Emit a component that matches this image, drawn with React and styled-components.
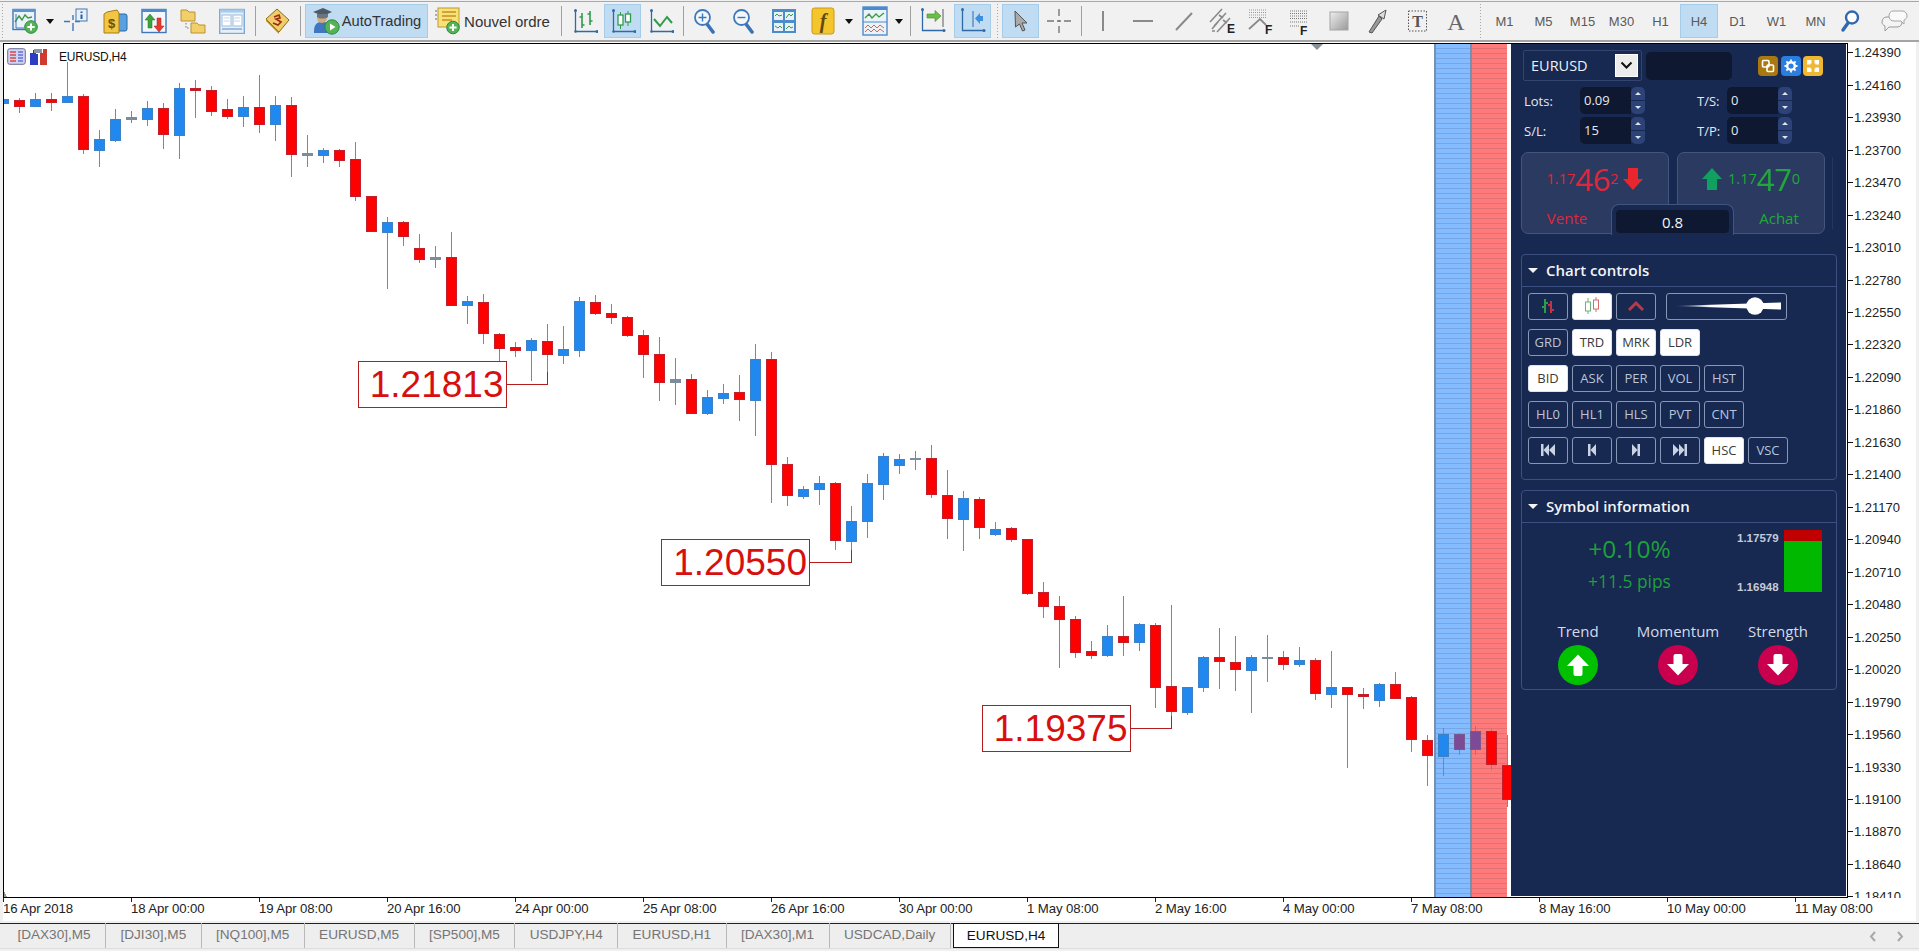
import React from "react";
import styled, { createGlobalStyle } from "styled-components";

const GlobalStyle = createGlobalStyle`
  html, body { margin: 0; padding: 0; background: #f0f0f0; overflow: hidden; }
  * { box-sizing: border-box; }
`;

const Page = styled.div`
  width: 1919px; height: 951px; display: flex; flex-direction: column;
  background: #f0f0f0; font-family: "Liberation Sans", Arial, sans-serif; overflow: hidden;
`;
const Toolbar = styled.div`
  height: 41px; margin-top: 1px; display: flex; align-items: center; padding-left: 1px;
  border-top: 1px solid #a8a8a8; border-bottom: 2px solid #a4a4a4; background: #f1f1f1; flex: none;
`;
const Grip = styled.div`
  width: ${p => p.$w || 5}px; height: 34px; flex: none;
  background: repeating-linear-gradient(to bottom, #a8a8a8 0 1px, transparent 1px 3px) ${p => p.$x || 1}px 0 / 1px 100% no-repeat;
`;
const Slot = styled.div`
  width: ${p => p.$w}px; height: 34px; flex: none; display: flex; align-items: center; justify-content: center;
  gap: ${p => p.$gap || 0}px; font-size: ${p => p.$fs || 14.7}px; color: #333;
  background: ${p => (p.$active ? "#bfdcf3" : "transparent")};
  border: 1px solid ${p => (p.$active ? "#a5cdea" : "transparent")};
`;
const Caret = styled.div`
  width: ${p => p.$w}px; flex: none; display: flex; justify-content: center;
  &::before { content: ""; border: 4px solid transparent; border-top: 5px solid #111; border-bottom: 0; }
`;
const Sep = styled.div`
  width: ${p => p.$w}px; height: 30px; flex: none; position: relative;
  background: linear-gradient(#a0a0a0, #a0a0a0) ${p => p.$x}px 0 / 1px 100% no-repeat;
`;
const Tf = styled(Slot)`font-size: 13px; color: #5a5a5a;`;

const ChartArea = styled.div`
  margin-left: 3px; width: 1913px; height: 879px; background: #fff; flex: none; display: flex; flex-direction: column;
`;
const UpperRow = styled.div`display: flex; height: 856px; padding-top: 1px; flex: none;`;
const Plot = styled.div`
  position: relative; width: 1845px; height: 855px; flex: none; overflow: hidden;
  border: 1px solid #000; border-width: 1px 1px 1px 1px; background: #fff;
`;
const ChartSvg = styled.svg`position: absolute; left: 0; top: 0; display: block;`;
const Band = styled.div`
  position: absolute; top: 0; bottom: 0; left: ${p => p.$l}px; width: ${p => p.$w}px;
  border-left: 2px solid ${p => p.$edge};
  background: repeating-linear-gradient(to bottom, ${p => p.$c} 0 4px, ${p => p.$line} 4px 5px);
`;
const Legend = styled.div`
  position: absolute; left: 3px; top: 4px; display: flex; align-items: center; gap: 3px;
  font-size: 12px; color: #111; letter-spacing: -0.2px;
`;
const LegendText = styled.span`margin-left: 7px;`;
const ShiftMark = styled.div`
  position: absolute; left: 1307px; top: 0; border: 6px solid transparent; border-top: 6px solid #8a9098; border-bottom: 0;
`;
const PriceLabel = styled.div`
  position: absolute; left: ${p => p.$x}px; top: ${p => p.$y}px; width: 149px; height: 47px;
  border: 1px solid #b51c1c; background: #fff; color: #d80f0f; font-size: 37px; line-height: 45px;
  text-align: right; padding-right: 2px;
`;
const Axis = styled.div`
  flex: 1; margin-top: -6.5px; overflow: hidden; font-size: 13px; color: #222;
`;
const AxisRow = styled.div`
  height: 32.47px; display: flex; align-items: center; gap: 1px;
  &::before { content: ""; width: 5px; height: 1px; background: #111; }
`;
const TimeAxis = styled.div`display: flex; height: 23px; flex: none; font-size: 13.2px; color: #222;`;
const TimeCell = styled.div`
  width: 128px; flex: none; position: relative; padding-top: 3px; line-height: 15px; white-space: nowrap; letter-spacing: -0.1px;
  &::before { content: ""; position: absolute; left: 0; top: 0; width: 1px; height: 4px; background: #222; }
`;

const TabBar = styled.div`
  margin-top: 2px; height: 25px; border-top: 1px solid #222; display: flex; padding-left: 3px; flex: none;
  position: relative; background: #eee; font-size: 13.6px; color: #757575;
`;
const Tab = styled.div`
  padding: 0 14.4px; height: 25px; line-height: 23px; margin-top: -1px; flex: none; white-space: nowrap;
  ${p => p.$active
    ? "background:#fff;color:#111;border:1px solid #111;border-top:1px solid #111;padding:0 13px;margin-left:2px;"
    : "border-right:1px solid #b9b9b9;"}
`;
const TabArrows = styled.div`
  position: absolute; right: 15px; top: 7px; display: flex; gap: 19px;
`;
const Footer = styled.div`flex: 1; border-top: 1px solid #dcdcdc; background: #f0f0f0;`;

/* Panel */
const Panel = styled.div`
  position: absolute; left: 1507px; top: 0; width: 335px; height: 852px; background: #172851;
  font-family: "Open Sans", sans-serif; color: #e4e9f2; padding: 6px 0 0 10px; display: flex; flex-direction: column;
`;
const TopRow = styled.div`display: flex; align-items: center; margin-left: 2px; height: 31px;`;
const Combo = styled.div`
  width: 119px; height: 31px; border: 1px solid #33456f; border-radius: 2px; display: flex; align-items: center;
  justify-content: space-between; padding: 0 3px 0 7px; font-size: 14.5px; color: #eef1f6;
`;
const ComboBtn = styled.div`
  width: 23px; height: 23px; background: #ececec; border: 1px solid #fff; display: flex; align-items: center; justify-content: center;
`;
const DarkBox = styled.div`
  width: 86px; height: 28px; margin-left: 4px; background: #0e1830; border-radius: 5px;
`;
const Tools = styled.div`display: flex; gap: 2.5px; margin-left: 26px;`;
const ToolBtn = styled.div`
  width: 20px; height: 20px; border-radius: 4px; background: ${p => p.$c}; display: flex; align-items: center; justify-content: center;
`;
const FieldRow = styled.div`
  display: flex; align-items: center; margin: ${p => p.$mt}px 0 0 3px; height: 27px; font-size: 13px;
`;
const FieldLabel = styled.div`width: ${p => p.$w}px; flex: none; color: #e4e9f2;`;
const Input = styled.div`
  width: 51px; height: 27px; background: #0e1830; border-radius: 5px 0 0 5px; padding-left: 4px; line-height: 27px; color: #e4e9f2; flex: none;
`;
const Spin = styled.div`width: 14px; height: 27px; display: flex; flex-direction: column; gap: 1px; flex: none;`;
const SpinPart = styled.div`
  flex: 1; background: #2d4378; display: flex; align-items: center; justify-content: center;
  border-radius: ${p => (p.$up ? "5px 5px 0 0" : "0 0 5px 5px")};
  &::before { content: ""; border: 3.5px solid transparent;
    ${p => (p.$up ? "border-bottom: 3.5px solid #dfe5f0; border-top: 0;" : "border-top: 3.5px solid #dfe5f0; border-bottom: 0;")} }
`;
const FieldGap = styled.div`width: 52px; flex: none;`;
const Trade = styled.div`
  position: relative; display: flex; gap: 8px; margin-top: 8px; height: 82px; flex: none;
`;
const TradeBox = styled.div`
  width: 148px; height: 82px; border: 1px solid #43557f; border-radius: 7px; background: #2a3a60;
  display: flex; flex-direction: column; color: ${p => p.$c};
`;
const Quote = styled.div`
  height: 52px; display: flex; align-items: center; justify-content: center; font-size: 14.5px; gap: 0;
`;
const Big = styled.span`font-size: 31px; line-height: 40px; letter-spacing: -0.3px;`;
const QuoteArrow = styled.span`display: flex; margin: 0 ${p => p.$r || 0}px 0 ${p => p.$l || 0}px;`;
const TradeLabel = styled.div`
  width: 90px; font-size: 15px; text-align: center; line-height: 29px; align-self: ${p => (p.$right ? "flex-end" : "flex-start")};
`;
const Notch = styled.div`
  position: absolute; left: 90px; top: 52px; width: 123px; height: 31px; background: #172851;
  border: 1px solid #43557f; border-bottom: 0; border-radius: 8px 8px 0 0; padding: 5px 4px 2px;
`;
const SpreadValue = styled.div`
  height: 23px; border-radius: 4px; background: #0e1830; color: #f2f4f8; font-size: 15px; line-height: 24px; text-align: center;
`;
const TradeRule = styled.div`
  position: absolute; left: 311px; top: 5px; width: 1px; height: 72px; background: #26375f;
`;
const Group = styled.div`
  width: 316px; height: ${p => p.$h}px; margin-top: ${p => p.$mt}px; border: 1px solid #3b5080; border-radius: 4px; flex: none;
  display: flex; flex-direction: column;
`;
const GroupHead = styled.div`
  height: 31.5px; border-bottom: 1px solid #3b5080; flex: none; display: flex; align-items: center; gap: 8px; padding-left: 6px;
  font-size: 15px; font-weight: 600; color: #f2f4f8;
  &::before { content: ""; border: 5px solid transparent; border-top: 5px solid #f2f4f8; border-bottom: 0; }
`;
const Controls = styled.div`display: flex; flex-direction: column; padding: 6px 0 0 6px;`;
const CtrlRow = styled.div`display: flex; gap: 4px; height: ${p => p.$h || 27}px; margin-bottom: ${p => p.$mb}px;`;
const Ctrl = styled.div`
  width: 40px; height: 100%; border-radius: 3px; display: flex; align-items: center; justify-content: center;
  font-size: 13px; flex: none;
  ${p => (p.$on ? "background:#fff;color:#3a3a3a;border:1px solid #dfe3ea;" : "border:1px solid #8798b6;color:#b9c6da;")}
`;
const SliderBox = styled.div`
  width: 121px; height: 27px; margin-left: 6px; border: 1px solid #8798b6; border-radius: 3px; display: flex; align-items: center; justify-content: center;
`;
const InfoTop = styled.div`display: flex; height: 97px; flex: none;`;
const InfoPct = styled.div`
  width: 215px; padding-top: 9px; margin-left: 0; text-align: center; color: #1f9f3c; font-size: 24.5px; line-height: 34px;
`;
const Pips = styled.div`font-size: 17.4px; margin-top: 3px; line-height: 24px;`;
const RangeLabels = styled.div`
  width: 44px; margin-top: 8px; height: 62px; display: flex; flex-direction: column; justify-content: space-between;
  font: bold 11.5px "Liberation Sans", Arial, sans-serif; color: #c3cbda; padding: 1px 0 0; flex: none;
`;
const RangeBar = styled.div`
  width: 38px; height: 62px; margin: 7px 0 0 3px; background: linear-gradient(#c00000 0 11px, #00b800 11px); flex: none;
`;
const Signals = styled.div`display: grid; grid-template-columns: 100px 100px 100px; margin-left: 6px;`;
const Signal = styled.div`
  display: flex; flex-direction: column; align-items: center; gap: 3px; font-size: 15px; line-height: 22px; color: #d4dbe7;
`;
const Circle = styled.div`
  width: 40px; height: 40px; border-radius: 50%; background: ${p => p.$c}; display: flex; align-items: center; justify-content: center;
`;

/* ---- icons ---- */
const Ic = ({ w = 26, h = 26, children, vb = "0 0 26 26" }) => (
  <svg width={w} height={h} viewBox={vb} style={{ flex: "none" }}>{children}</svg>
);
const Plus = ({ cx = 19, cy = 19 }) => (
  <>
    <circle cx={cx} cy={cy} r="6.3" fill="#55b255" stroke="#2c8a3c" />
    <path d={`M${cx} ${cy - 3.6}v7.2M${cx - 3.6} ${cy}h7.2`} stroke="#fff" strokeWidth="2" />
  </>
);
const NewChartI = () => (
  <Ic>
    <rect x="1" y="1.5" width="22" height="20" fill="#eaf2fa" stroke="#3f78b8" strokeWidth="1.4" />
    <rect x="1" y="1" width="22" height="3" fill="#5b94d0" />
    <path d="M3 14L7 8l3 4 3-5 3 3 4-1" fill="none" stroke="#3a9a3a" strokeWidth="1.4" />
    <path d="M4 6v14h8" fill="none" stroke="#3f78b8" />
    <Plus />
  </Ic>
);
const InfoI = () => (
  <Ic>
    <path d="M10 7v5M10 15v8M1 13.5h6M12 13.5h5" stroke="#3f78b8" strokeWidth="1.4" />
    <rect x="13" y="1" width="11" height="12" fill="#e8f0fa" stroke="#3f78b8" />
    <path d="M18.5 3.5v1.5M18.5 6.5v4.5" stroke="#2b5e9a" strokeWidth="2" />
  </Ic>
);
const DollarI = () => (
  <Ic>
    <rect x="10" y="6" width="15" height="17" rx="2" fill="#5aa0e0" stroke="#2b6aa8" />
    <path d="M5 4l10-2 2 3v20H2V6z" fill="#f2c544" stroke="#a87c12" />
    <text x="9.5" y="20" fontSize="13" fontFamily="Liberation Sans" fontWeight="bold" textAnchor="middle" fill="#6e4e00">$</text>
  </Ic>
);
const ArrowsI = () => (
  <Ic>
    <rect x="1" y="1.5" width="24" height="23" fill="#f3f7fc" stroke="#3f78b8" strokeWidth="1.4" />
    <rect x="1" y="1" width="24" height="3" fill="#4d8ccb" />
    <path d="M9 6l5 6h-3v8H7v-8H4z" fill="#3aa53a" stroke="#237a23" strokeWidth=".5" />
    <path d="M18 24l-5-6h3v-8h4v8h3z" fill="#e23a2e" stroke="#a52218" strokeWidth=".5" />
  </Ic>
);
const FoldersI = () => (
  <Ic>
    <path d="M1 2h6l2 2h6v9H1z" fill="#f3cf6b" stroke="#b89330" />
    <path d="M11 15h6l2 2h6v8H11z" fill="#f3cf6b" stroke="#b89330" />
    <path d="M6 15v5h4" fill="none" stroke="#777" strokeDasharray="1.5 1.5" />
  </Ic>
);
const LayoutI = () => (
  <Ic>
    <rect x=".7" y="1.5" width="24.6" height="24" fill="#e6eff9" stroke="#7fa9d5" strokeWidth="1.4" />
    <rect x="1" y="1.5" width="24" height="3" fill="#a8cbec" />
    <rect x="3" y="7" width="9" height="11" fill="#fff" stroke="#9bbcdf" />
    <rect x="14" y="7" width="9" height="11" fill="#fff" stroke="#9bbcdf" />
    <path d="M3 21h20" stroke="#9bbcdf" strokeWidth="2" />
    <path d="M15 10h6M15 13h6M4.5 10h6M4.5 13h6" stroke="#c4d6ea" />
  </Ic>
);
const BookI = () => (
  <Ic w={27} h={26} vb="0 0 27 26">
    <path d="M2 11L13 1l12 11-10 12z" fill="#f0cd6a" stroke="#8b6b18" />
    <path d="M2 11l13 13v2L2 13z" fill="#b18a24" />
    <path d="M10 9l5-2 1 3-4 1 5 3-3 3-5-2" fill="none" stroke="#9a2c14" strokeWidth="1.6" />
  </Ic>
);
const AutoI = () => (
  <Ic w={28} h={28} vb="0 0 28 28">
    <path d="M2 24c0-6 3-9 7-9h3c3 0 6 3 6 9v2H2z" fill="#3f78c0" />
    <circle cx="10" cy="11" r="5" fill="#d8a878" />
    <path d="M1 5l10-4 9 4-9 4z" fill="#4e5a66" />
    <path d="M5 7v3c3 2 8 2 11 0V7z" fill="#6a7580" />
    <circle cx="20" cy="20" r="7.2" fill="#55b255" stroke="#2c8a3c" />
    <path d="M18 16.5l5.5 3.5-5.5 3.5z" fill="#fff" />
  </Ic>
);
const OrderI = () => (
  <Ic w={27} h={28} vb="0 0 27 28">
    <rect x="3" y="1" width="21" height="19" fill="#f7e27a" stroke="#bd9a2e" />
    <path d="M7 5h14M7 9h14M7 13h10" stroke="#c78f21" strokeWidth="1.5" />
    <path d="M1 3v2M1 7v2M1 11v2" stroke="#666" />
    <Plus cx={18} cy={20.5} />
  </Ic>
);
const Axes = () => (
  <>
    <path d="M3.5 3v20.5H25" fill="none" stroke="#2f6aa8" strokeWidth="1.3" />
    <circle cx="3.5" cy="2.5" r="1.5" fill="#2f6aa8" />
    <circle cx="25" cy="23.5" r="1.5" fill="#2f6aa8" />
    <circle cx="3.5" cy="23.5" r="1.2" fill="#2f6aa8" />
  </>
);
const BarI = () => (
  <Ic>
    <Axes />
    <path d="M10 5v15M7.5 9H10M10 17h2.5M18 3v14M15.5 6H18M18 13h2.5" stroke="#2f9c4c" strokeWidth="1.6" fill="none" />
  </Ic>
);
const CandleI = () => (
  <Ic>
    <Axes />
    <path d="M10.5 4v17M18 3v15" stroke="#2f9c4c" />
    <rect x="8" y="7" width="5" height="10" fill="#fff" stroke="#2f9c4c" strokeWidth="1.3" />
    <rect x="15.5" y="6" width="5" height="8" fill="#fff" stroke="#2f9c4c" strokeWidth="1.3" />
  </Ic>
);
const LineI = () => (
  <Ic>
    <Axes />
    <path d="M6 11l6 7 7-9 5 6" fill="none" stroke="#2f9c4c" strokeWidth="2" />
  </Ic>
);
const ZoomI = ({ plus }) => (
  <Ic>
    <path d="M14 16l6 8" stroke="#3a74b4" strokeWidth="3.6" strokeLinecap="round" />
    <circle cx="9.5" cy="9.5" r="7.5" fill="#f2f7fc" stroke="#3f78b8" strokeWidth="1.8" />
    <path d={plus ? "M9.5 5.5v8M5.5 9.5h8" : "M5.5 9.5h8"} stroke="#3f78b8" strokeWidth="1.4" />
  </Ic>
);
const TileI = () => (
  <Ic>
    <rect x="1" y="1" width="24" height="24" fill="#4d8ccb" />
    <rect x="3" y="4" width="9" height="8" fill="#e8f1fa" />
    <rect x="14" y="4" width="9" height="8" fill="#e8f1fa" />
    <rect x="3" y="15" width="9" height="8" fill="#e8f1fa" />
    <rect x="14" y="15" width="9" height="8" fill="#e8f1fa" />
    <path d="M4 8l2-2 2 2 3-1M15 10l3-4 2 2 2-2M4 18l3 2 2-2 2 2M15 21l3-3 2 2 2-1" stroke="#3a9a3a" fill="none" />
  </Ic>
);
const FnI = () => (
  <Ic w={24} h={28} vb="0 0 24 28">
    <rect x="1" y="1" width="22" height="26" rx="2.5" fill="#f5c52c" stroke="#c79a18" />
    <text x="12" y="21" fontSize="20" fontStyle="italic" fontWeight="bold" fontFamily="Liberation Serif" textAnchor="middle" fill="#5d4a12">f</text>
  </Ic>
);
const IndI = () => (
  <Ic w={26} h={30} vb="0 0 26 30">
    <rect x="1" y="1" width="24" height="28" fill="#eaf2fa" stroke="#4d8ccb" strokeWidth="1.4" />
    <rect x="1" y="1" width="24" height="3" fill="#4d8ccb" />
    <path d="M3 12l4-4 3 4 4-4 3 3 5-4" fill="none" stroke="#3a9a3a" strokeWidth="1.3" />
    <path d="M1 16h24" stroke="#4d8ccb" />
    <path d="M3 22l3-3 3 3 3-3 3 3 3-3 4 3M3 26l3-3 3 3 3-3 3 3 3-3 4 3" fill="none" stroke="#cc6a55" />
  </Ic>
);
const ShiftI = () => (
  <Ic w={27} h={28} vb="0 0 27 28">
    <path d="M3.5 3v20.5H25" fill="none" stroke="#2f6aa8" strokeWidth="1.3" />
    <circle cx="3.5" cy="2.5" r="1.5" fill="#2f6aa8" />
    <circle cx="25" cy="23.5" r="1.5" fill="#2f6aa8" />
    <path d="M24 2v18" stroke="#5a5a5a" />
    <path d="M8 7h8V3.5l6 5.5-6 5.5V11H8z" fill="#6cbd45" stroke="#3f8c2c" strokeWidth=".6" />
  </Ic>
);
const ScrollI = () => (
  <Ic w={27} h={28} vb="0 0 27 28">
    <path d="M3.5 3v20.5H25" fill="none" stroke="#2f6aa8" strokeWidth="1.3" />
    <circle cx="3.5" cy="2.5" r="1.5" fill="#2f6aa8" />
    <circle cx="25" cy="23.5" r="1.5" fill="#2f6aa8" />
    <path d="M14 4v16" stroke="#2f6aa8" />
    <path d="M24 9v5h-3v3l-5-5.500 5-5.500v3z" fill="#3d8fe0" />
  </Ic>
);
const CursorI = () => (
  <Ic>
    <path d="M7 3l12 12h-5l3 7-2.500 1-3-7-4 3z" fill="#a9a9a9" stroke="#555" />
  </Ic>
);
const CrossI = () => (
  <Ic>
    <path d="M13 1v7M13 12v2M13 18v7M1 13h7M11 13h4M18 13h7" stroke="#777" strokeWidth="1.4" />
  </Ic>
);
const VLineI = () => (<Ic><path d="M13 3v20" stroke="#8a8a8a" strokeWidth="2" /></Ic>);
const HLineI = () => (<Ic><path d="M3 13h20" stroke="#8a8a8a" strokeWidth="2" /></Ic>);
const TrendI = () => (<Ic><path d="M6 22L22 5" stroke="#8a8a8a" strokeWidth="2" /></Ic>);
const ChanI = () => (
  <Ic w={28} h={28} vb="0 0 28 28">
    <path d="M2 15L14 2M6 19L18 6M9 25L22 11M4 22l6-7M4 24h3M11 8l4 3M15 13l4 3" stroke="#8a8a8a" strokeWidth="1.6" fill="none" />
    <text x="19" y="26" fontSize="12" fontWeight="bold" fontFamily="Liberation Sans" fill="#222">E</text>
  </Ic>
);
const GannI = () => (
  <Ic w={26} h={28} vb="0 0 26 28">
    <path d="M1 3h17M1 5.500h17M1 8h17M1 10.500h17" stroke="#9a9a9a" strokeDasharray="1 1" />
    <path d="M1 22l11-10 6 6" stroke="#8a8a8a" strokeWidth="1.8" fill="none" />
    <text x="17" y="27" fontSize="12" fontWeight="bold" fontFamily="Liberation Sans" fill="#222">F</text>
  </Ic>
);
const FiboI = () => (
  <Ic w={22} h={28} vb="0 0 22 28">
    <path d="M1 4h18M1 6.500h18M1 9h18M1 11.500h18M1 15h18M1 19h10" stroke="#777" strokeDasharray="1 1" />
    <text x="11" y="28" fontSize="12" fontWeight="bold" fontFamily="Liberation Sans" fill="#222">F</text>
  </Ic>
);
const RectI = () => (
  <Ic w={20} h={22} vb="0 0 20 22">
    <defs><linearGradient id="rg" x1="0" y1="0" x2="1" y2="1"><stop offset="0" stopColor="#eee" /><stop offset="1" stopColor="#999" /></linearGradient></defs>
    <rect x="1" y="2" width="18" height="18" fill="url(#rg)" stroke="#a5a5a5" />
  </Ic>
);
const ArrI = () => (
  <Ic w={22} h={26} vb="0 0 22 26">
    <path d="M2 24L12 8l3 3L5 25z" fill="#999" stroke="#555" />
    <path d="M11 7l8-5-2 9z" fill="#ddd" stroke="#555" />
  </Ic>
);
const TBoxI = () => (
  <Ic w={22} h={24} vb="0 0 22 24">
    <rect x="1.500" y="2" width="18" height="20" fill="none" stroke="#555" strokeDasharray="1.500 1.500" />
    <text x="10.500" y="18" fontSize="16" fontWeight="bold" fontFamily="Liberation Serif" textAnchor="middle" fill="#555">T</text>
  </Ic>
);
const AI = () => (
  <Ic w={22} h={24} vb="0 0 22 24">
    <text x="11" y="21" fontSize="24" fontFamily="Liberation Serif" textAnchor="middle" fill="#666">A</text>
  </Ic>
);
const SearchI = () => (
  <Ic w={20} h={24} vb="0 0 20 24">
    <path d="M8 14L3 21" stroke="#3268b0" strokeWidth="3.400" strokeLinecap="round" />
    <circle cx="12" cy="8.500" r="6" fill="#fff" stroke="#3268b0" strokeWidth="2.400" />
  </Ic>
);
const ChatI = () => (
  <Ic w={27} h={24} vb="0 0 27 24">
    <path d="M6 8h10c3 0 5 2 5 5s-2 5-5 5H8l-4 4v-5c-2-1-3-2-3-4 0-3 2-5 5-5z" fill="#f4f4f4" stroke="#999" />
    <path d="M12 2h9c3 0 5 2 5 5 0 2-1 3-3 4v4l-3-3h-7c-3 0-5-2-5-5s2-5 4-5z" fill="#fafafa" stroke="#a5a5a5" />
  </Ic>
);
const LegendI = () => (
  <Ic w={19} h={17} vb="0 0 19 17">
    <rect x=".7" y=".7" width="17.600" height="15.600" rx="2" fill="#cfd4f5" stroke="#6b6f92" />
    <path d="M3 4h6M3 7h6M3 10h6M3 13h6" stroke="#d84848" strokeWidth="1.500" />
    <path d="M11 4h5M11 7h5M11 10h5M11 13h5" stroke="#6a6fd0" strokeWidth="1.500" />
  </Ic>
);
const LegendII = () => (
  <Ic w={20} h={17} vb="0 0 20 17">
    <path d="M1 5h3v-3h3v4h2v11H1z" fill="#2a3dc4" />
    <path d="M11 5h3V1h4v16h-7z" fill="#cc3a30" />
    <path d="M5 1h8v4H5z" fill="#8a96a8" />
  </Ic>
);
const Chev = () => (
  <Ic w={13} h={9} vb="0 0 13 9"><path d="M1.500 1.500L6.500 6.500l5-5" fill="none" stroke="#111" strokeWidth="2" /></Ic>
);
const CopyG = () => (
  <Ic w={14} h={14} vb="0 0 14 14">
    <rect x="1.500" y="1.500" width="6.500" height="6.500" rx="1" fill="none" stroke="#fff" strokeWidth="1.600" />
    <rect x="6" y="6" width="6.500" height="6.500" rx="1" fill="none" stroke="#fff" strokeWidth="1.600" />
  </Ic>
);
const GearG = () => (
  <Ic w={14} h={14} vb="0 0 14 14">
    <circle cx="7" cy="7" r="3.800" fill="none" stroke="#fff" strokeWidth="2.400" />
    <path d="M7 .5v2M7 11.500v2M.5 7h2M11.500 7h2M2.400 2.400l1.400 1.400M10.200 10.200l1.400 1.400M2.400 11.600l1.400-1.400M10.200 3.800l1.400-1.400" stroke="#fff" strokeWidth="1.800" />
  </Ic>
);
const FourG = () => (
  <Ic w={14} h={14} vb="0 0 14 14">
    <path d="M1 1h4.500v4.500H1zM8.500 1H13v4.500H8.500zM1 8.500h4.500V13H1zM8.500 8.500H13V13H8.500z" fill="#fff" />
    <rect x="4.500" y="4.500" width="5" height="5" fill="#f0b733" />
  </Ic>
);
const FatArrow = ({ up, c, w = 20, h = 24 }) => (
  <Ic w={w} h={h} vb="0 0 20 24">
    <path d={up ? "M10 1l10 11h-5v11H5V12H0z" : "M10 23L0 12h5V1h10v11h5z"} fill={c} />
  </Ic>
);
const RoundArrow = ({ up }) => (
  <Ic w={24} h={24} vb="0 0 24 24">
    <path d={up
      ? "M12 1.500L23 13h-6.500v8a2 2 0 0 1-2 2h-5a2 2 0 0 1-2-2v-8H1z"
      : "M12 22.500L1 11h6.500V3a2 2 0 0 1 2-2h5a2 2 0 0 1 2 2v8H23z"} fill="#fff" strokeLinejoin="round" />
  </Ic>
);
const BarsMini = () => (
  <Ic w={18} h={18} vb="0 0 18 18">
    <path d="M6 2v14M3 10h3M6 6h3" stroke="#2f9c4c" strokeWidth="2" />
    <path d="M12 4v12M9 8h3M12 13h3" stroke="#c8323c" strokeWidth="2" />
  </Ic>
);
const CandlesMini = () => (
  <Ic w={20} h={18} vb="0 0 20 18">
    <path d="M6 1v16" stroke="#6db07a" />
    <rect x="3.500" y="5" width="5" height="9" fill="#fff" stroke="#6db07a" />
    <path d="M14 0v15" stroke="#d86a6a" />
    <rect x="11.500" y="3" width="5" height="9" fill="#fff" stroke="#d86a6a" />
  </Ic>
);
const LineMini = () => (
  <Ic w={18} h={14} vb="0 0 18 14"><path d="M2 11l7-7 7 7" fill="none" stroke="#b53a4a" strokeWidth="3" /></Ic>
);
const Skip = ({ d }) => (
  <Ic w={16} h={14} vb="0 0 16 14"><path d={d} fill="#c9d3e3" /></Ic>
);
const SliderDraw = () => (
  <Ic w={115} h={22} vb="0 0 115 22">
    <defs><linearGradient id="sl" x1="0" x2="1"><stop offset="0" stopColor="#fff" stopOpacity="0" /><stop offset=".35" stopColor="#fff" /></linearGradient></defs>
    <path d="M4 11L112 7.500v7z" fill="url(#sl)" />
    <circle cx="86" cy="11" r="8.700" fill="#fff" />
  </Ic>
);

/* ---- chart data: [kind, high, top, bottom, low], as read off the chart ---- */
const A = [
  ["b",178,178,188,188],["r",174,181,197,218],["b",159,178,197,197],["r",159,178,185,212],["b",65,169,185,185],
  ["r",162,169,328,342],["b",270,298,329,380],["b",208,238,299,305],["d",214,232,236,250],["b",183,205,236,258],
  ["r",189,205,281,326],["b",129,144,284,356],["r",120,145,151,234],["r",138,151,214,227],["r",177,208,227,237],
  ["b",168,202,227,261],["r",105,202,253,279],["b",168,196,253,302],["r",171,196,343,410],["d",285,340,344,381],
  ["b",324,330,344,369],["r",328,331,359,381],["r",306,358,469,483],["r",467,468,572,574],["b",531,547,575,747],
  ["r",544,545,587,618],["r",583,625,658,670],["d",618,652,656,684],["r",576,652,794,796],["b",769,784,794,852],
  ["r",762,785,880,912],["r",880,881,925,968],["r",907,922,929,950],["b",895,901,929,1023],["r",852,902,943,1030],
  ["b",857,928,944,972],["b",771,784,929,950],["r",765,785,818,824],["r",793,820,832,852],["r",827,832,884,891],
  ["r",870,884,943,1013],
];
const B = [
  ["r",50,103,187,242],["d",114,178,185,254],["r",162,178,280,281],["b",210,232,278,284],["b",193,220,233,252],
  ["r",165,217,236,302],["b",72,118,239,347],["r",97,118,431,548],["r",411,431,526,557],["b",498,508,527,537],
  ["b",468,490,506,555],["r",487,490,661,689],["b",558,604,662,725],["b",462,490,604,654],["b",400,409,491,540],
  ["b",402,418,434,462],["d",393,414,418,449],["r",376,415,523,533],["r",450,524,595,656],["b",514,535,596,692],
  ["r",532,538,622,656],["b",606,628,641,648],["r",620,625,658,665],["r",656,658,818,824],
];
const C = [
  ["r",66,97,139,173],["r",108,139,176,323],["r",168,176,277,293],["r",243,274,284,296],["b",195,229,284,290],
  ["r",108,229,245,287],["b",188,192,245,272],["r",188,196,382,443],["r",135,379,454,505],["b",380,382,455,465],
  ["b",289,292,380,395],["r",204,292,302,386],["r",228,307,328,392],["b",285,292,329,458],["d",225,292,293,365],
  ["r",272,292,311,329],["b",261,300,311,321],["r",295,301,400,419],["b",272,381,401,443],["r",381,382,401,623],
  ["r",384,401,409,446],["b",370,372,419,440],["r",337,373,415,416],["r",408,412,538,575],["r",525,539,586,678],
  ["b",505,522,587,647],["p",520,523,568,586],["p",498,514,566,586],["r",508,514,613,630],["r",525,614,716,740],
];
const conv = (arr, y0, start) => arr.map((c, k) => ({
  i: start + k, kind: c[0], h: y0 + c[1] / 3, t: y0 + c[2] / 3, b: y0 + c[3] / 3, l: y0 + c[4] / 3,
}));
const CANDLES = [...conv(A, 40, 0), ...conv(B, 320, 41), ...conv(C, 560, 65)];
const FILL = { r: "#ff0000", b: "#2088ee", d: "#7b8c9c", p: "#7d4a96" };
const EDGE = { r: "#c2202c", b: "#3d82c6", d: "#7b8c9c", p: "#7a5a8e" };

const Chart = () => (
  <ChartSvg width="1843" height="853" viewBox="4 44 1843 853" shapeRendering="crispEdges">
    {CANDLES.map(c => {
      const cx = 3.5 + 16 * c.i;
      const top = Math.round(c.t) + 0.5;
      const hgt = Math.max(1, Math.round(c.b) - Math.round(c.t));
      return (
        <g key={c.i}>
          <path d={`M${cx} ${Math.round(c.h)}V${Math.round(c.l)}`} stroke="#7b8793" strokeWidth="1" />
          <rect x={cx - 5} y={top} width="10" height={hgt} fill={FILL[c.kind]} stroke={EDGE[c.kind]} strokeWidth="1" />
        </g>
      );
    })}
    <path d="M505 384.500H547.500V372M808 562.500H851.500V550M1129 728.500H1171.500V716" fill="none" stroke="#b51c1c" strokeWidth="1" />
    <path d="M4 891l3 6H4z" fill="#999" />
  </ChartSvg>
);

const PRICES = Array.from({ length: 27 }, (_, i) => (1.2439 - 0.0023 * i).toFixed(5));
const TIMES = ["16 Apr 2018","18 Apr 00:00","19 Apr 08:00","20 Apr 16:00","24 Apr 00:00","25 Apr 08:00","26 Apr 16:00","30 Apr 00:00","1 May 08:00","2 May 16:00","4 May 00:00","7 May 08:00","8 May 16:00","10 May 00:00","11 May 08:00"];
const TABS = ["[DAX30],M5","[DJI30],M5","[NQ100],M5","EURUSD,M5","[SP500],M5","USDJPY,H4","EURUSD,H1","[DAX30],M1","USDCAD,Daily"];
const TFS = [["M1",39],["M5",39],["M15",39],["M30",39],["H1",39]];
const TFS2 = [["D1",39],["W1",39],["MN",39]];

const Field = ({ label, w, value }) => (
  <>
    <FieldLabel $w={w}>{label}</FieldLabel>
    <Input>{value}</Input>
    <Spin><SpinPart $up /><SpinPart /></Spin>
  </>
);

export default function App() {
  return (
    <Page>
      <GlobalStyle />
      <Toolbar>
        <Grip />
        <Slot $w={37}><NewChartI /></Slot>
        <Caret $w={13} />
        <Slot $w={39}><InfoI /></Slot>
        <Slot $w={39}><DollarI /></Slot>
        <Slot $w={39}><ArrowsI /></Slot>
        <Slot $w={39}><FoldersI /></Slot>
        <Slot $w={39}><LayoutI /></Slot>
        <Sep $w={9} $x={4} />
        <Slot $w={35}><BookI /></Slot>
        <Sep $w={10} $x={5} />
        <Slot $w={123} $active $gap={2}><AutoI />AutoTrading</Slot>
        <Slot $w={129} $gap={2} $fs={15}><OrderI />Nouvel ordre</Slot>
        <Sep $w={8} $x={4} />
        <Slot $w={39}><BarI /></Slot>
        <Slot $w={37} $active><CandleI /></Slot>
        <Slot $w={39}><LineI /></Slot>
        <Sep $w={6} $x={3} />
        <Slot $w={39}><ZoomI plus /></Slot>
        <Slot $w={39}><ZoomI /></Slot>
        <Slot $w={39}><TileI /></Slot>
        <Slot $w={39}><FnI /></Slot>
        <Caret $w={13} />
        <Slot $w={39}><IndI /></Slot>
        <Caret $w={9} />
        <Sep $w={14} $x={7} />
        <Slot $w={31}><ShiftI /></Slot>
        <Sep $w={6} $x={9} />
        <Slot $w={37} $active><ScrollI /></Slot>
        <Grip $w={11} $x={6} />
        <Slot $w={37} $active><CursorI /></Slot>
        <Slot $w={40}><CrossI /></Slot>
        <Sep $w={4} $x={2} />
        <Slot $w={40}><VLineI /></Slot>
        <Slot $w={40}><HLineI /></Slot>
        <Slot $w={39}><TrendI /></Slot>
        <Slot $w={39}><ChanI /></Slot>
        <Slot $w={39}><GannI /></Slot>
        <Slot $w={39}><FiboI /></Slot>
        <Slot $w={39}><RectI /></Slot>
        <Slot $w={40}><ArrI /></Slot>
        <Slot $w={39}><TBoxI /></Slot>
        <Slot $w={38}><AI /></Slot>
        <Grip $w={10} $x={5} />
        {TFS.map(([t, w]) => <Tf key={t} $w={w}>{t}</Tf>)}
        <Tf $w={38} $active>H4</Tf>
        {TFS2.map(([t, w]) => <Tf key={t} $w={w}>{t}</Tf>)}
        <Slot $w={30}><SearchI /></Slot>
        <Slot $w={58}><ChatI /></Slot>
      </Toolbar>

      <ChartArea>
        <UpperRow>
          <Plot>
            <Band $l={1430} $w={37} $c="#84bcff" $line="#74a6e6" $edge="#7690b4" />
            <Band $l={1466} $w={37} $c="#ff7b7b" $line="#e26f72" $edge="#7690b4" />
            <Chart />
            <Legend>
              <LegendI /><LegendII />
              <LegendText>EURUSD,H4</LegendText>
            </Legend>
            <ShiftMark />
            <PriceLabel $x={353.500} $y={316.500}>1.21813</PriceLabel>
            <PriceLabel $x={657} $y={494.500}>1.20550</PriceLabel>
            <PriceLabel $x={977.500} $y={660.500}>1.19375</PriceLabel>
            <Panel>
              <TopRow>
                <Combo>EURUSD<ComboBtn><Chev /></ComboBtn></Combo>
                <DarkBox />
                <Tools>
                  <ToolBtn $c="#a97810"><CopyG /></ToolBtn>
                  <ToolBtn $c="#2a7de1"><GearG /></ToolBtn>
                  <ToolBtn $c="#f0b733"><FourG /></ToolBtn>
                </Tools>
              </TopRow>
              <FieldRow $mt={6}>
                <Field label="Lots:" w={56} value="0.09" />
                <FieldGap />
                <Field label="T/S:" w={30} value="0" />
              </FieldRow>
              <FieldRow $mt={3}>
                <Field label="S/L:" w={56} value="15" />
                <FieldGap />
                <Field label="T/P:" w={30} value="0" />
              </FieldRow>
              <Trade>
                <TradeBox $c="#e0263a">
                  <Quote>1.17<Big>46</Big>2<QuoteArrow $l={5}><FatArrow c="#e8262e" /></QuoteArrow></Quote>
                  <TradeLabel>Vente</TradeLabel>
                </TradeBox>
                <TradeBox $c="#22a83a">
                  <Quote><QuoteArrow $r={6}><FatArrow up c="#10a060" /></QuoteArrow>1.17<Big>47</Big>0</Quote>
                  <TradeLabel $right>Achat</TradeLabel>
                </TradeBox>
                <Notch><SpreadValue>0.8</SpreadValue></Notch>
                <TradeRule />
              </Trade>
              <Group $h={226} $mt={20}>
                <GroupHead>Chart controls</GroupHead>
                <Controls>
                  <CtrlRow $mb={9}>
                    <Ctrl><BarsMini /></Ctrl>
                    <Ctrl $on><CandlesMini /></Ctrl>
                    <Ctrl><LineMini /></Ctrl>
                    <SliderBox><SliderDraw /></SliderBox>
                  </CtrlRow>
                  <CtrlRow $mb={9}>
                    <Ctrl>GRD</Ctrl><Ctrl $on>TRD</Ctrl><Ctrl $on>MRK</Ctrl><Ctrl $on>LDR</Ctrl>
                  </CtrlRow>
                  <CtrlRow $mb={9}>
                    <Ctrl $on>BID</Ctrl><Ctrl>ASK</Ctrl><Ctrl>PER</Ctrl><Ctrl>VOL</Ctrl><Ctrl>HST</Ctrl>
                  </CtrlRow>
                  <CtrlRow $mb={9}>
                    <Ctrl>HL0</Ctrl><Ctrl>HL1</Ctrl><Ctrl>HLS</Ctrl><Ctrl>PVT</Ctrl><Ctrl>CNT</Ctrl>
                  </CtrlRow>
                  <CtrlRow $mb={0}>
                    <Ctrl><Skip d="M1 1h2.500v12H1zM9 1v12L3.500 7zM15 1v12L9 7z" /></Ctrl>
                    <Ctrl><Skip d="M4 1h2.500v12H4zM12 1v12L6.500 7z" /></Ctrl>
                    <Ctrl><Skip d="M4 1v12l5.500-6zM9.500 1H12v12H9.500z" /></Ctrl>
                    <Ctrl><Skip d="M1 1v12l6-6zM7 1v12l5.500-6zM12.500 1H15v12h-2.500z" /></Ctrl>
                    <Ctrl $on>HSC</Ctrl><Ctrl>VSC</Ctrl>
                  </CtrlRow>
                </Controls>
              </Group>
              <Group $h={200} $mt={10}>
                <GroupHead>Symbol information</GroupHead>
                <InfoTop>
                  <InfoPct>+0.10%<Pips>+11.5 pips</Pips></InfoPct>
                  <RangeLabels><span>1.17579</span><span>1.16948</span></RangeLabels>
                  <RangeBar />
                </InfoTop>
                <Signals>
                  <Signal>Trend<Circle $c="#00c000"><RoundArrow up /></Circle></Signal>
                  <Signal>Momentum<Circle $c="#c8004e"><RoundArrow /></Circle></Signal>
                  <Signal>Strength<Circle $c="#c8004e"><RoundArrow /></Circle></Signal>
                </Signals>
              </Group>
            </Panel>
          </Plot>
          <Axis>
            {PRICES.map(p => <AxisRow key={p}>{p}</AxisRow>)}
          </Axis>
        </UpperRow>
        <TimeAxis>
          {TIMES.map(t => <TimeCell key={t}>{t}</TimeCell>)}
        </TimeAxis>
      </ChartArea>

      <TabBar>
        {TABS.map(t => <Tab key={t}>{t}</Tab>)}
        <Tab $active>EURUSD,H4</Tab>
        <TabArrows>
          <Ic w={8} h={11} vb="0 0 8 11"><path d="M6 1L2 5.500 6 10" fill="none" stroke="#a8a8a8" strokeWidth="2" /></Ic>
          <Ic w={8} h={11} vb="0 0 8 11"><path d="M2 1l4 4.500L2 10" fill="none" stroke="#a8a8a8" strokeWidth="2" /></Ic>
        </TabArrows>
      </TabBar>
      <Footer />
    </Page>
  );
}
